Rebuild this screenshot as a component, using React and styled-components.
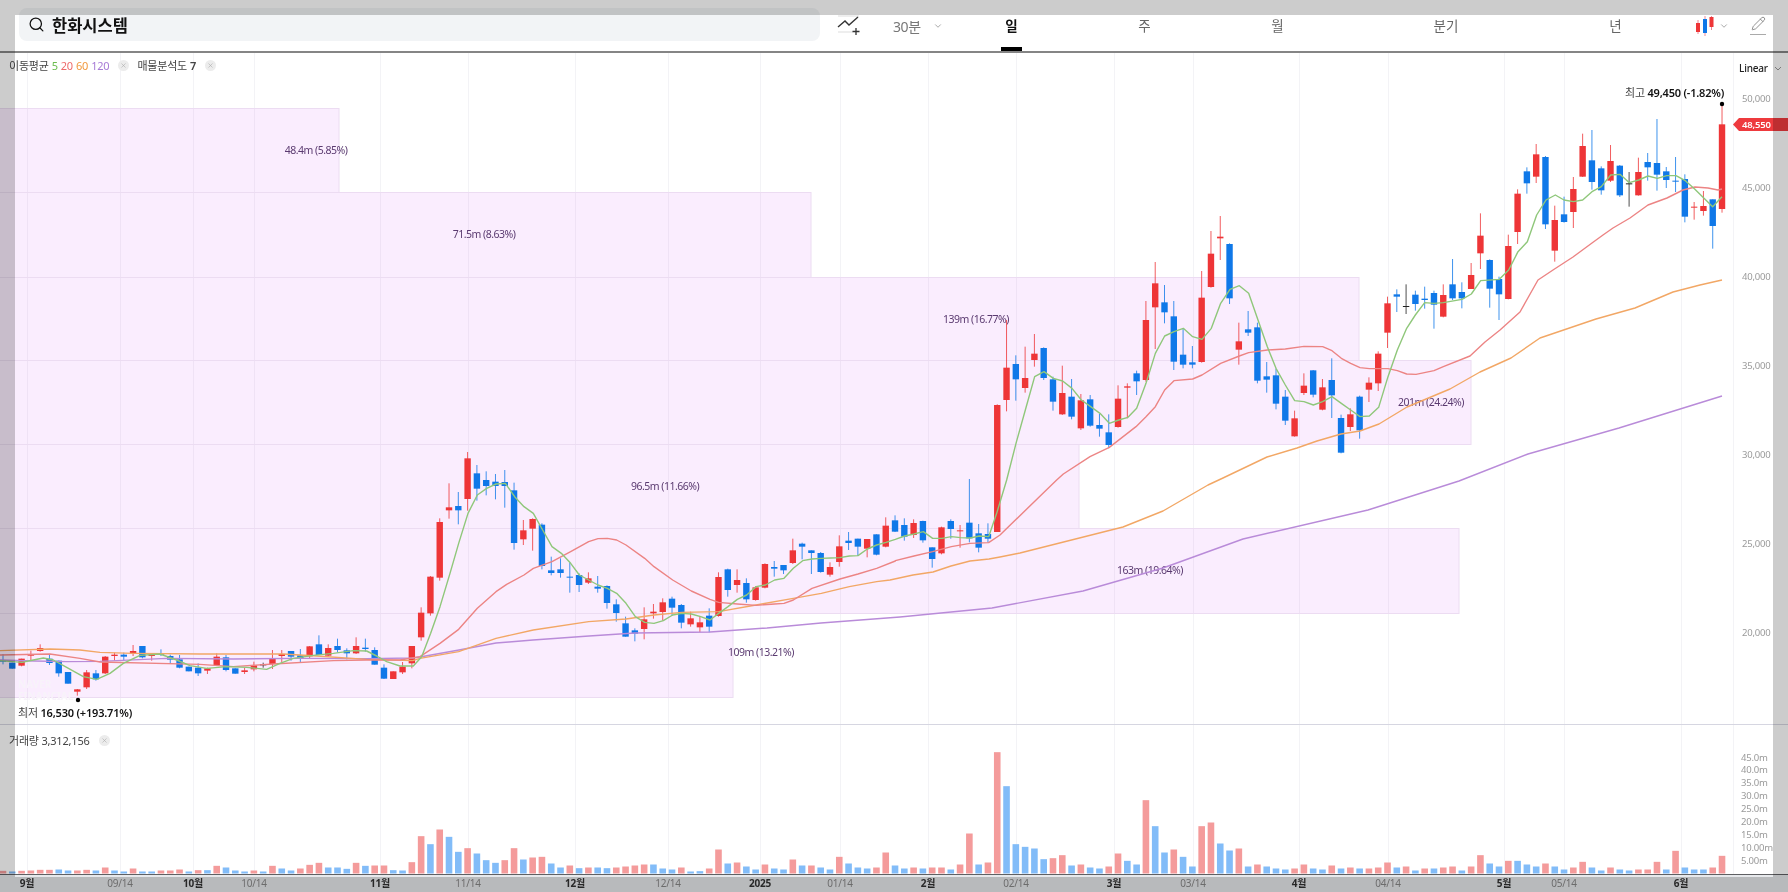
import React from "react";
import styled, { createGlobalStyle } from "styled-components";
import { Search, ChevronDown, Pencil, X } from "lucide-react";

const GlobalStyle = createGlobalStyle`
  html, body {
    margin: 0;
    padding: 0;
    background: #fff;
    font-family: "Noto Sans", "Noto Sans CJK KR", sans-serif;
  }
`;

// candles traced per section: [colour, wickTop, bodyTop, bodyBottom, wickBottom], in thirds of a pixel from baseY
const section = (baseY, rows) =>
  rows.map(([c, wt, bt, bb, wb]) => ({
    c,
    wt: baseY + wt / 3,
    bt: baseY + bt / 3,
    bb: baseY + bb / 3,
    wb: baseY + wb / 3,
  }));

const candles = [
  ...section(630, [
    ["b", 72, 91, 95, 103], ["b", 98, 98, 116, 116], ["r", 86, 86, 107, 109], ["r", 62, 72, 77, 92],
    ["r", 43, 54, 63, 65], ["b", 72, 86, 99, 105], ["b", 92, 92, 130, 140], ["b", 126, 126, 161, 161],
    ["r", 177, 178, 185, 197], ["r", 120, 127, 172, 177], ["b", 120, 130, 148, 152], ["r", 78, 80, 130, 132],
    ["r", 68, 74, 78, 92], ["b", 68, 74, 80, 92], ["r", 45, 63, 70, 78], ["b", 48, 48, 82, 85],
    ["r", 75, 75, 78, 92], ["b", 58, 69, 74, 78], ["b", 74, 78, 89, 100], ["b", 75, 88, 113, 115],
    ["b", 110, 110, 124, 124], ["b", 100, 113, 130, 138], ["r", 113, 115, 122, 132], ["r", 70, 80, 105, 108],
    ["b", 75, 82, 120, 124], ["b", 115, 115, 131, 131], ["r", 114, 121, 126, 132], ["r", 95, 106, 118, 124],
    ["k", 98, 103, 104, 113], ["r", 60, 85, 102, 117], ["r", 60, 72, 78, 97], ["b", 63, 63, 80, 92],
    ["b", 57, 76, 85, 96], ["r", 48, 49, 79, 87], ["b", 16, 43, 75, 75], ["r", 43, 54, 77, 80],
    ["b", 26, 48, 60, 67], ["b", 55, 61, 70, 88], ["r", 22, 48, 70, 72], ["b", 26, 53, 57, 65],
    ["b", 52, 60, 104, 104], ["b", 103, 113, 146, 147], ["r", 124, 124, 147, 147], ["r", 96, 110, 127, 132],
    ["r", 48, 48, 100, 115],
  ]),
  ...section(430, [
    ["r", 532, 548, 622, 632], ["r", 438, 440, 550, 557], ["r", 265, 276, 443, 452], ["r", 160, 232, 241, 266],
    ["b", 186, 228, 241, 283], ["r", 66, 85, 207, 242], ["b", 105, 130, 176, 212], ["b", 124, 150, 168, 196],
    ["b", 132, 155, 168, 208], ["b", 120, 156, 168, 233], ["b", 158, 181, 339, 359], ["r", 270, 301, 328, 345],
    ["r", 265, 267, 296, 362], ["b", 280, 284, 408, 418], ["b", 380, 421, 429, 436], ["b", 385, 418, 429, 443],
    ["b", 398, 440, 442, 488], ["b", 430, 435, 465, 486], ["r", 427, 445, 458, 462], ["b", 438, 470, 476, 488],
    ["b", 466, 468, 519, 536], ["b", 508, 523, 549, 575], ["b", 560, 580, 620, 620], ["b", 595, 601, 611, 634],
    ["r", 532, 568, 597, 628], ["r", 522, 545, 550, 566], ["r", 505, 517, 546, 572], ["b", 500, 506, 533, 558],
    ["b", 522, 525, 578, 595], ["r", 545, 565, 583, 590], ["r", 558, 577, 592, 606], ["b", 535, 557, 590, 607],
    ["r", 427, 441, 558, 560], ["b", 416, 418, 480, 500], ["r", 418, 450, 465, 488], ["b", 445, 459, 508, 518],
    ["r", 468, 472, 510, 512], ["r", 400, 402, 473, 475], ["b", 393, 411, 416, 440], ["b", 405, 405, 421, 432],
    ["r", 326, 361, 399, 402], ["b", 338, 341, 350, 388], ["b", 361, 361, 369, 432], ["b", 366, 369, 426, 428],
    ["r", 397, 411, 434, 440], ["r", 316, 349, 396, 410], ["b", 306, 332, 339, 360], ["b", 326, 326, 350, 378],
    ["r", 327, 327, 356, 382], ["b", 313, 313, 374, 376], ["r", 262, 287, 350, 352],
  ]),
  ...section(470, [
    ["b", 136, 151, 185, 186], ["b", 145, 165, 200, 212], ["r", 148, 159, 195, 204], ["b", 152, 153, 211, 218],
    ["b", 232, 232, 267, 293], ["r", 170, 172, 250, 253], ["b", 148, 153, 177, 206], ["r", 165, 181, 183, 233],
    ["b", 27, 158, 205, 217], ["b", 162, 190, 233, 247], ["b", 160, 192, 206, 218],
  ]),
  ...section(200, [
    ["r", 613, 615, 996, 996], ["r", 360, 503, 600, 634], ["b", 466, 492, 538, 602], ["r", 440, 534, 564, 578],
    ["r", 402, 461, 480, 500], ["b", 442, 444, 534, 540], ["b", 530, 538, 605, 632], ["r", 497, 579, 643, 645],
    ["b", 537, 590, 650, 658], ["r", 582, 601, 685, 690], ["b", 585, 598, 677, 680], ["b", 642, 675, 686, 710],
    ["b", 643, 697, 735, 745], ["r", 556, 596, 681, 683], ["r", 550, 559, 563, 655], ["b", 512, 520, 544, 585],
    ["r", 303, 360, 540, 545], ["r", 186, 250, 322, 447], ["b", 255, 307, 337, 370], ["b", 303, 349, 485, 510],
    ["b", 385, 464, 494, 505], ["b", 438, 487, 494, 505], ["r", 213, 293, 486, 488], ["r", 93, 161, 261, 263],
    ["r", 48, 110, 115, 180], ["b", 130, 132, 295, 312], ["r", 368, 424, 449, 494], ["b", 333, 388, 398, 408],
    ["b", 368, 382, 542, 550], ["b", 486, 529, 539, 578], ["b", 506, 526, 611, 628], ["b", 570, 590, 662, 675],
    ["r", 632, 655, 709, 710], ["r", 520, 557, 579, 585], ["b", 510, 511, 584, 592], ["r", 537, 562, 629, 631],
    ["b", 475, 540, 586, 654], ["b", 644, 654, 758, 760], ["r", 625, 643, 681, 693], ["b", 587, 590, 691, 716],
    ["r", 532, 548, 569, 606], ["r", 454, 461, 550, 573], ["r", 290, 310, 398, 444], ["b", 268, 283, 290, 336],
    ["k", 253, 318, 320, 342], ["b", 272, 284, 312, 332], ["b", 260, 296, 300, 326], ["b", 272, 279, 314, 386],
    ["r", 253, 285, 350, 352],
  ]),
  ...section(90, [
    ["b", 507, 583, 625, 630], ["b", 577, 606, 625, 655], ["r", 519, 555, 597, 597], ["r", 370, 437, 490, 537],
    ["b", 508, 510, 596, 653], ["b", 560, 567, 613, 690], ["r", 434, 468, 627, 628], ["r", 298, 311, 426, 462],
    ["b", 232, 244, 280, 311], ["r", 162, 193, 260, 279], ["b", 198, 201, 403, 417], ["r", 347, 390, 482, 515],
    ["b", 320, 373, 396, 398], ["r", 261, 297, 366, 414], ["r", 131, 168, 260, 261], ["b", 120, 211, 276, 299],
    ["b", 229, 235, 301, 314], ["r", 165, 213, 272, 276], ["b", 225, 227, 316, 321], ["k", 246, 280, 282, 350],
    ["r", 203, 246, 316, 317], ["b", 189, 216, 232, 272], ["b", 87, 219, 254, 302], ["b", 231, 244, 270, 294],
    ["b", 201, 272, 275, 306], ["b", 253, 267, 380, 397], ["r", 336, 350, 353, 389], ["r", 303, 348, 363, 377],
    ["b", 328, 328, 408, 476], ["r", 43, 103, 357, 368],
  ]),
];

// positive = red bar, negative = blue bar, in thirds of a pixel
const volumes = [
  8, -6, 8, 9, 11, 11, -12, -9, 9, 11, -9, 18, -9, -6, 15, -6, -6, 9, 9, 12, -6, 10, -10, 23, -18, -9, -6, 9, -6, 23,
  -15, -9, 15, 26, 32, -18, -18, -14, 32, -23, 24, 24, -10, -9, 34, 112, -88, 132, -110, -65, 76, -60, -40, -32, 40, 76, -42, 48, 50, -30,
  -18, 24, -16, 18, -18, -16, 18, 21, 24, 27, -27, -15, -12, 18, -6, -7, 15, 72, -30, 33, -21, -12, 27, -15, -12, 42, -24, 24, -18, -12,
  50, -30, -18, -15, 18, 63, -24, -15, 18, -15, 18, 18, -12, 27, 120, -27, 33, 364, -262, -88, -80, -75, -43, 46, 55, -24, 27, -18, -15, 21,
  60, -38, -27, 220, -142, -63, 72, -50, -21, 142, 153, -90, -69, 75, -21, 27, -21, -15, -12, 15, 27, -15, -12, 24, -15, 18, -15, 15, 18, 33,
  -18, 21, -9, 15, -15, 18, 21, -9, 21, 55, -30, -21, 38, -38, -27, -21, 30, -21, -12, 18, 35, -18, -9, 18, -12, -9, 12, 12, 35, -12,
  68, -18, -12, -12, 18, 53,
];

const trace = (x0, y0, pts) => pts.map(([x, y]) => [x0 + x / 3, y0 + y / 3]);

const ma5 = [
  ...trace(0, 630, [[0, 92], [66, 97], [100, 90], [130, 84], [160, 90], [200, 112], [250, 140], [290, 148], [330, 130], [370, 100], [420, 76], [480, 72], [530, 90], [570, 107], [620, 115], [680, 110], [740, 112], [800, 118], [840, 100], [880, 85], [940, 76], [1000, 70], [1060, 62], [1100, 63], [1130, 78], [1160, 95], [1200, 108]]),
  ...trace(400, 430, [[40, 708], [65, 680], [92, 610], [120, 530], [150, 430], [176, 340], [204, 250], [232, 195], [260, 175], [288, 162], [316, 160], [344, 200], [372, 230], [400, 250], [428, 300], [456, 350], [484, 370], [512, 400], [538, 435], [566, 450], [594, 465], [622, 475], [650, 490], [678, 520], [706, 560], [734, 577], [762, 580], [790, 572], [818, 555], [846, 550], [874, 552], [902, 560], [930, 570], [956, 550], [984, 530], [1012, 508], [1040, 495], [1068, 470], [1096, 465], [1124, 450], [1152, 445], [1180, 415], [1208, 392], [1236, 387], [1264, 385], [1292, 384], [1320, 383], [1348, 378], [1374, 377], [1402, 357], [1430, 345], [1458, 337]]),
  ...trace(780, 470, [[346, 208], [374, 198], [402, 192], [430, 185], [458, 205], [486, 205], [514, 200], [542, 203], [570, 204], [598, 198], [626, 200], [650, 130]]),
  ...trace(950, 200, [[170, 840], [198, 730], [226, 630], [254, 530], [282, 515], [310, 535], [338, 543], [366, 565], [394, 600], [422, 620], [450, 640], [478, 670], [506, 660], [534, 652], [560, 625], [588, 550], [616, 460], [644, 408], [672, 395], [700, 385], [728, 410], [756, 418], [784, 385], [812, 310], [840, 268], [868, 257], [896, 280], [924, 360], [952, 440], [978, 505], [1006, 555], [1034, 602], [1062, 605], [1090, 615], [1118, 605], [1146, 590], [1174, 610], [1202, 630], [1230, 650], [1258, 648], [1286, 622], [1314, 530], [1342, 450], [1370, 385], [1396, 345], [1424, 308], [1452, 310], [1480, 308]]),
  ...trace(1370, 220, [[276, 238], [304, 222], [332, 182], [388, 178], [416, 150], [444, 95], [472, 65]]),
  ...trace(1400, 90, [[410, 375], [438, 330], [466, 315], [492, 330], [520, 335], [548, 330], [576, 305], [604, 290], [632, 255], [660, 253], [688, 278], [716, 270], [744, 258], [772, 265], [800, 257], [828, 257], [856, 272], [884, 297], [912, 325], [938, 350], [966, 320]]),
];

const ma20 = [
  ...trace(0, 630, [[0, 75], [150, 72], [240, 85], [300, 96], [600, 103], [700, 110], [820, 102], [1000, 92], [1100, 90], [1200, 90]]),
  ...trace(400, 430, [[60, 680], [120, 640], [176, 598], [232, 535], [288, 485], [320, 463], [372, 435], [400, 415], [456, 395], [512, 365], [566, 335], [594, 326], [622, 325], [650, 330], [678, 345], [734, 385], [762, 410], [818, 450], [874, 483], [930, 508], [956, 517], [1012, 522], [1068, 526], [1124, 522], [1152, 520], [1180, 510], [1236, 475], [1320, 447], [1374, 432], [1430, 415], [1486, 393]]),
  ...trace(780, 470, [[346, 272], [402, 258], [458, 245], [514, 230], [570, 220], [626, 218], [660, 195]]),
  ...trace(950, 200, [[320, 840], [340, 822], [420, 770], [478, 742], [558, 680], [588, 650], [616, 620], [644, 570], [672, 542], [728, 537], [756, 525], [812, 490], [868, 468], [896, 458], [952, 450], [1006, 447], [1062, 439], [1118, 440], [1146, 452], [1174, 475], [1202, 490], [1230, 503], [1258, 506], [1314, 506], [1342, 512], [1370, 522], [1398, 523], [1452, 512], [1480, 500]]),
  [1470, 356], [1485, 342], [1500, 330], [1520, 312], [1538, 280], [1553, 270], [1573, 257], [1592, 243], [1603, 235], [1613, 228], [1630, 218], [1648, 205], [1667, 198], [1683, 190], [1695, 187], [1708, 188], [1718, 190], [1722, 189],
];

const ma60 = [
  ...trace(0, 630, [[0, 62], [150, 57], [240, 60], [300, 67], [400, 70], [600, 72], [850, 72], [950, 78], [1100, 88], [1238, 92]]),
  ...trace(400, 430, [[60, 685], [176, 665], [288, 625], [400, 600], [566, 575], [678, 567], [762, 555], [846, 547], [956, 545], [1068, 525], [1180, 505], [1264, 490], [1348, 470], [1430, 455]]),
  [890, 580], [913, 575], [933, 572], [951, 566], [970, 561], [989, 559], [1000, 557], [1020, 553], [1123, 527], [1163, 511], [1208, 485], [1223, 478], [1267, 457], [1297, 448], [1317, 441], [1341, 434], [1360, 431], [1379, 424], [1407, 407], [1450, 389], [1480, 372], [1511, 358], [1540, 338], [1596, 319], [1635, 308], [1673, 292], [1700, 285], [1722, 280],
];

const ma120 = [
  ...trace(0, 630, [[0, 90], [100, 93], [200, 95], [300, 94], [500, 85], [700, 87], [900, 85], [1100, 86], [1238, 84]]),
  [420, 657], [459, 650], [496, 643], [533, 640], [589, 636], [635, 633], [710, 632], [767, 628], [821, 623], [900, 617], [992, 608], [1083, 591], [1163, 568], [1243, 539], [1368, 510], [1459, 481], [1528, 454], [1619, 428], [1722, 396],
];

const zones = [
  { top: 108, right: 339, label: "48.4m (5.85%)", lx: 316 },
  { top: 192, right: 811, label: "71.5m (8.63%)", lx: 484 },
  { top: 277, right: 1359, label: "139m (16.77%)", lx: 976 },
  { top: 360, right: 1471, label: "201m (24.24%)", lx: 1431 },
  { top: 444, right: 1079, label: "96.5m (11.66%)", lx: 665 },
  { top: 528, right: 1459, label: "163m (19.64%)", lx: 1150 },
  { top: 613, right: 733, label: "109m (13.21%)", lx: 761 },
];

const ticks = [
  { x: 27, text: "9월", major: true }, { x: 120, text: "09/14" }, { x: 193, text: "10월", major: true },
  { x: 254, text: "10/14" }, { x: 380, text: "11월", major: true }, { x: 468, text: "11/14" },
  { x: 575, text: "12월", major: true }, { x: 668, text: "12/14" }, { x: 760, text: "2025", major: true },
  { x: 840, text: "01/14" }, { x: 928, text: "2월", major: true }, { x: 1016, text: "02/14" },
  { x: 1114, text: "3월", major: true }, { x: 1193, text: "03/14" }, { x: 1299, text: "4월", major: true },
  { x: 1388, text: "04/14" }, { x: 1504, text: "5월", major: true }, { x: 1564, text: "05/14" },
  { x: 1681, text: "6월", major: true },
];

const priceTicks = ["50,000", "45,000", "40,000", "35,000", "30,000", "25,000", "20,000"];
const volumeTicks = ["45.0m", "40.0m", "35.0m", "30.0m", "25.0m", "20.0m", "15.0m", "10.00m", "5.00m"];

const candleColors = { r: "#ee3537", b: "#0f78e8", k: "#222" };
const xAt = (i) => 3 + i * 9.292;
const toPoints = (pts) => pts.map((p) => p.join(",")).join(" ");

const Page = styled.div`
  position: relative;
  width: 1788px;
  height: 892px;
  overflow: hidden;
  background: #fff;
  display: flex;
  flex-direction: column;
  filter: blur(0.35px);
`;

const Toolbar = styled.header`
  flex: none;
  height: 53px;
  box-sizing: border-box;
  border-bottom: 2px solid #858585;
  padding: 8px 0 0 19px;
  display: flex;
  align-items: flex-start;
`;

const SearchBox = styled.div`
  flex: none;
  width: 801px;
  height: 33px;
  box-sizing: border-box;
  padding-left: 9px;
  border-radius: 8px;
  background: #f2f4f6;
  display: flex;
  align-items: center;
  gap: 7px;
  color: #111;
  font-size: 16.5px;
  font-weight: 700;
`;

const CompareButton = styled.svg`
  flex: none;
  margin: 7px 0 0 17px;
`;

const Interval = styled.div`
  flex: none;
  width: 52px;
  height: 36px;
  margin-left: 32px;
  display: flex;
  align-items: center;
  gap: 12px;
  color: #777;
  font-size: 14px;
  letter-spacing: -0.4px;
  white-space: nowrap;
`;

const Tabs = styled.nav`
  flex: none;
  display: grid;
  grid-template-columns: 133px 133px 133px 204px 135px;
  height: 43px;
`;

const Tab = styled.div`
  position: relative;
  display: flex;
  justify-content: center;
  padding-top: 8px;
  font-size: 13.5px;
  line-height: 20px;
  color: ${(p) => (p.$active ? "#111" : "#666")};
  font-weight: ${(p) => (p.$active ? 700 : 400)};

  &::after {
    content: "";
    display: ${(p) => (p.$active ? "block" : "none")};
    position: absolute;
    left: 56px;
    bottom: 0;
    width: 21px;
    height: 4px;
    background: #000;
  }
`;

const ChartStyle = styled.div`
  flex: none;
  width: 67px;
  height: 36px;
  display: flex;
  align-items: center;
  gap: 4px;
  padding-left: 12px;
  box-sizing: border-box;
  color: #999;
`;

const PencilButton = styled.div`
  flex: none;
  margin: 8px 0 0 0;
  width: 16px;
  color: #777;
  border-bottom: 1px solid #aaa;
  height: 18px;
  display: flex;
  justify-content: center;
`;

const ChartPane = styled.section`
  position: relative;
  flex: none;
  height: 671px;
`;

const VolumePane = styled.section`
  position: relative;
  flex: none;
  height: 150px;
  border-top: 1.5px solid #d6d6e1;
  box-sizing: border-box;
`;

const Plot = styled.svg`
  display: block;
  width: 1788px;
  height: 100%;
`;

const Legend = styled.div`
  position: absolute;
  left: 9px;
  top: ${(p) => p.$top}px;
  display: flex;
  align-items: center;
  gap: 3px;
  height: 16px;
  color: #444;
  font-size: 11px;
  letter-spacing: -0.2px;
  white-space: nowrap;
`;

const LegendValue = styled.span`
  color: ${(p) => p.$color || "#444"};
  font-weight: ${(p) => (p.$bold ? 600 : 400)};
`;

const CloseDot = styled.span`
  width: 11px;
  height: 11px;
  margin: 0 ${(p) => p.$after || 0}px 0 6px;
  border-radius: 50%;
  background: #ececec;
  color: #aaa;
  display: flex;
  align-items: center;
  justify-content: center;
`;

const PriceLabel = styled.text`
  fill: #9a9a9a;
  font-size: 9.5px;
  letter-spacing: -0.2px;
`;

const ZoneLabel = styled.text`
  fill: #5a3a70;
  font-size: 10.5px;
  letter-spacing: -0.5px;
  text-anchor: middle;
`;

const Extreme = styled.text`
  fill: #444;
  font-size: 11px;
  letter-spacing: -0.2px;
`;

const ExtremeValue = styled.tspan`
  fill: #111;
  font-weight: 600;
`;

const Watermark = styled.text`
  fill: #f8f3fa;
  font-size: 10px;
  font-weight: 700;
`;

const TagText = styled.text`
  fill: #fff;
  font-size: 9.5px;
  font-weight: 600;
  letter-spacing: -0.2px;
`;

const ScaleMode = styled.text`
  fill: #222;
  font-size: 10px;
  font-weight: 500;
  letter-spacing: -0.2px;
`;

const XAxis = styled.svg`
  display: block;
  flex: none;
  width: 1788px;
  height: 18px;
  background: #e7e9ec;
  border-top: 1px solid #5f6063;
  box-sizing: border-box;
`;

const TickLabel = styled.text`
  text-anchor: middle;
  font-size: 10px;
  letter-spacing: -0.2px;
  fill: ${(p) => (p.$major ? "#333" : "#888")};
  font-weight: ${(p) => (p.$major ? 700 : 400)};
`;

// grey page dimming around the popup, cut out with a big shadow
const PopupFrame = styled.div`
  position: absolute;
  left: 15px;
  top: 15px;
  width: 1758px;
  height: 862px;
  box-shadow: 0 0 0 1000px rgba(0, 0, 0, 0.2);
  pointer-events: none;
`;

const GridLines = ({ top, bottom }) => (
  <g stroke="#f3f3f6" strokeWidth="1">
    {ticks.map((t) => (
      <line key={t.text} x1={t.x + 0.5} x2={t.x + 0.5} y1={top} y2={bottom} />
    ))}
    <line x1="1733.5" x2="1733.5" y1={top} y2={bottom} />
  </g>
);

const Line = ({ points, color }) => (
  <polyline points={toPoints(points)} fill="none" stroke={color} strokeWidth="1.4" strokeLinejoin="round" />
);

const App = () => (
  <>
    <GlobalStyle />
    <Page>
      <Toolbar>
        <SearchBox>
          <Search size={17} strokeWidth={1.8} />
          한화시스템
        </SearchBox>
        <CompareButton width="24" height="20" viewBox="0 0 24 20" fill="none">
          <path d="M1 1h21M1 17h15" stroke="#ddd" />
          <path d="M1 12l7-6 4 4 9-8" stroke="#333" strokeWidth="1.4" />
          <path d="M19 13v7M15.500 16.500h7" stroke="#333" strokeWidth="1.3" />
        </CompareButton>
        <Interval>
          30분
          <ChevronDown size={10} color="#999" />
        </Interval>
        <Tabs>
          <Tab $active>일</Tab>
          <Tab>주</Tab>
          <Tab>월</Tab>
          <Tab>분기</Tab>
          <Tab>년</Tab>
        </Tabs>
        <ChartStyle>
          <svg width="20" height="20" viewBox="0 0 20 20">
            <path d="M3 4v14M10 0v20M16.500 0v14" stroke="#e89" strokeWidth="1" />
            <rect x="1" y="7" width="4" height="9" fill="#ee3537" />
            <rect x="8" y="3" width="4" height="14" fill="#0f78e8" />
            <rect x="14.500" y="1" width="4" height="10" fill="#ee3537" />
          </svg>
          <ChevronDown size={10} />
        </ChartStyle>
        <PencilButton>
          <Pencil size={15} strokeWidth={1.3} />
        </PencilButton>
      </Toolbar>

      <ChartPane>
        <Plot viewBox="0 53 1788 671">
          <GridLines top={53} bottom={724} />
          {zones.map((z, i) => (
            <rect
              key={z.top}
              x="-2"
              y={z.top + 0.5}
              width={z.right + 2}
              height={(zones[i + 1] ? zones[i + 1].top : 697) - z.top}
              fill="#cf45f0"
              fillOpacity="0.095"
              stroke="#ecdcf2"
            />
          ))}
          <Watermark x="18" y="688">NAVER</Watermark>
          <Watermark x="18" y="700">FINANCIAL</Watermark>
          {zones.map((z, i) => (
            <ZoneLabel key={z.label} x={z.lx} y={z.top + 46 - (i === 6 ? 3 : 0)}>{z.label}</ZoneLabel>
          ))}
          {priceTicks.map((t, i) => (
            <PriceLabel key={t} x="1742" y={101.5 + i * 89.1}>{t}</PriceLabel>
          ))}
          {candles.map((d, i) => (
            <g key={i} fill={candleColors[d.c]} stroke={candleColors[d.c]}>
              <line x1={xAt(i)} x2={xAt(i)} y1={d.wt} y2={d.wb} strokeWidth="1" strokeOpacity="0.8" />
              <rect
                x={xAt(i) - 3.2}
                y={d.bt}
                width="6.4"
                height={Math.max(d.bb - d.bt, 1)}
                stroke="none"
              />
            </g>
          ))}
          <Line points={ma120} color="#b98bd9" />
          <Line points={ma60} color="#f2a765" />
          <Line points={ma20} color="#ec8484" />
          <Line points={ma5} color="#8fc77a" />
          <circle cx="1722" cy="104" r="2.2" fill="#000" />
          <circle cx="78" cy="700" r="2.2" fill="#000" />
          <Extreme x="1625" y="97">최고 <ExtremeValue>49,450 (-1.82%)</ExtremeValue></Extreme>
          <Extreme x="18" y="717">최저 <ExtremeValue>16,530 (+193.71%)</ExtremeValue></Extreme>
          <ScaleMode x="1739" y="72">Linear</ScaleMode>
          <path d="M1775 67l3 3 3-3" fill="none" stroke="#999" />
          <polygon points="1733,124.500 1739,118 1788,118 1788,131 1739,131" fill="#ee3a3e" />
          <TagText x="1742" y="128">48,550</TagText>
        </Plot>
        <Legend $top={4}>
          이동평균
          <LegendValue $color="#6bbd4f">5</LegendValue>
          <LegendValue $color="#ee6a6a">20</LegendValue>
          <LegendValue $color="#f0983e">60</LegendValue>
          <LegendValue $color="#a77bd6">120</LegendValue>
          <CloseDot $after={5}><X size={7} /></CloseDot>
          매물분석도
          <LegendValue $bold>7</LegendValue>
          <CloseDot><X size={7} /></CloseDot>
        </Legend>
      </ChartPane>

      <VolumePane>
        <Plot viewBox="0 725 1788 149">
          <GridLines top={725} bottom={874} />
          {volumes.map((v, i) => (
            <rect
              key={i}
              x={xAt(i) - 3.3}
              y={873.5 - Math.abs(v) / 3}
              width="6.6"
              height={Math.abs(v) / 3}
              fill={v > 0 ? "#f49b9b" : "#82bcf8"}
            />
          ))}
          {volumeTicks.map((t, i) => (
            <PriceLabel key={t} x="1741" y={760.5 + i * 12.9}>{t}</PriceLabel>
          ))}
        </Plot>
        <Legend $top={7}>
          거래량 3,312,156
          <CloseDot><X size={7} /></CloseDot>
        </Legend>
      </VolumePane>

      <XAxis viewBox="0 875 1788 17">
        {ticks.map((t) => (
          <TickLabel key={t.text} x={t.x} y="887" $major={t.major}>{t.text}</TickLabel>
        ))}
      </XAxis>

      <PopupFrame />
    </Page>
  </>
);

export default App;
